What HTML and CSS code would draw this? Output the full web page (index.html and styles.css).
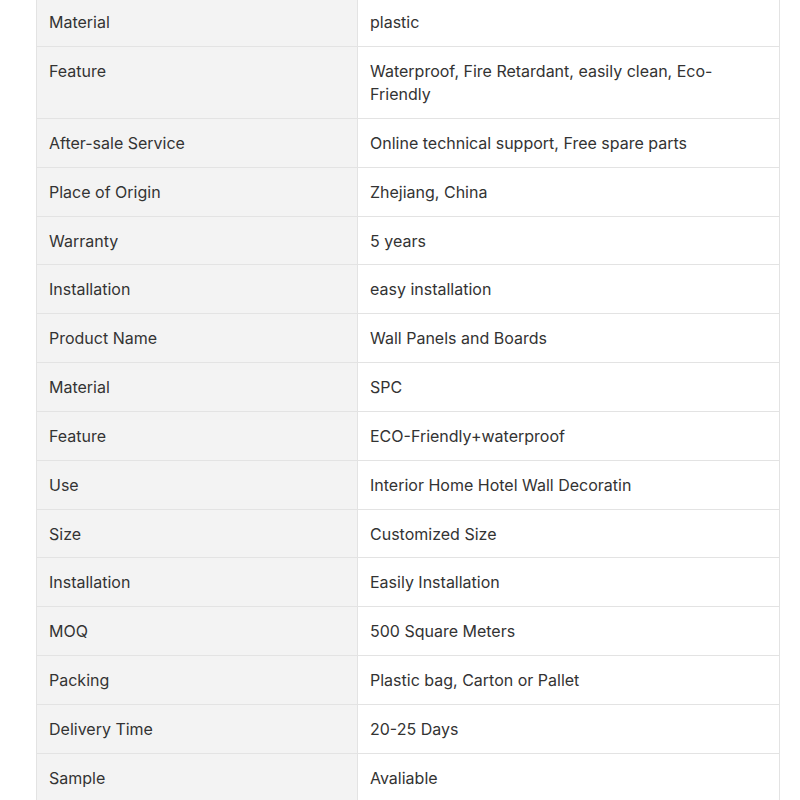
FILE: index.html
```html
<!DOCTYPE html>
<html>
<head>
<meta charset="utf-8">
<link rel="stylesheet" href="styles.css">
</head>
<body>
<table class="spec">
<tbody>
<tr><td class="k">Material</td><td class="v">plastic</td></tr>
<tr><td class="k">Feature</td><td class="v">Waterproof, Fire Retardant, easily clean, Eco-Friendly</td></tr>
<tr><td class="k">After-sale Service</td><td class="v">Online technical support, Free spare parts</td></tr>
<tr><td class="k">Place of Origin</td><td class="v">Zhejiang, China</td></tr>
<tr><td class="k">Warranty</td><td class="v">5 years</td></tr>
<tr><td class="k">Installation</td><td class="v">easy installation</td></tr>
<tr><td class="k">Product Name</td><td class="v">Wall Panels and Boards</td></tr>
<tr><td class="k">Material</td><td class="v">SPC</td></tr>
<tr><td class="k">Feature</td><td class="v">ECO-Friendly+waterproof</td></tr>
<tr><td class="k">Use</td><td class="v">Interior Home Hotel Wall Decoratin</td></tr>
<tr><td class="k">Size</td><td class="v">Customized Size</td></tr>
<tr><td class="k">Installation</td><td class="v">Easily Installation</td></tr>
<tr><td class="k">MOQ</td><td class="v">500 Square Meters</td></tr>
<tr><td class="k">Packing</td><td class="v">Plastic bag, Carton or Pallet</td></tr>
<tr><td class="k">Delivery Time</td><td class="v">20-25 Days</td></tr>
<tr><td class="k">Sample</td><td class="v">Avaliable</td></tr>
</tbody>
</table>
</body>
</html>
```
FILE: styles.css
```css
html, body {
  margin: 0;
  padding: 0;
  background: #ffffff;
}
body {
  font-family: Inter, "Noto Sans", sans-serif;
  font-size: 16px;
  color: #333333;
  padding: 0 21px 0 36px;
}
.spec {
  width: 744px;
  margin-top: -2.85px;
  border-collapse: collapse;
  table-layout: fixed;
}
.spec td {
  border: 1px solid #e3e3e3;
  padding: 13px 12px 11.85px 12px;
  line-height: 23px;
  vertical-align: top;
  text-align: left;
}
.spec .k {
  width: 296px;
  background: #f3f3f3;
}
.spec .v {
  background: #ffffff;
}
```
